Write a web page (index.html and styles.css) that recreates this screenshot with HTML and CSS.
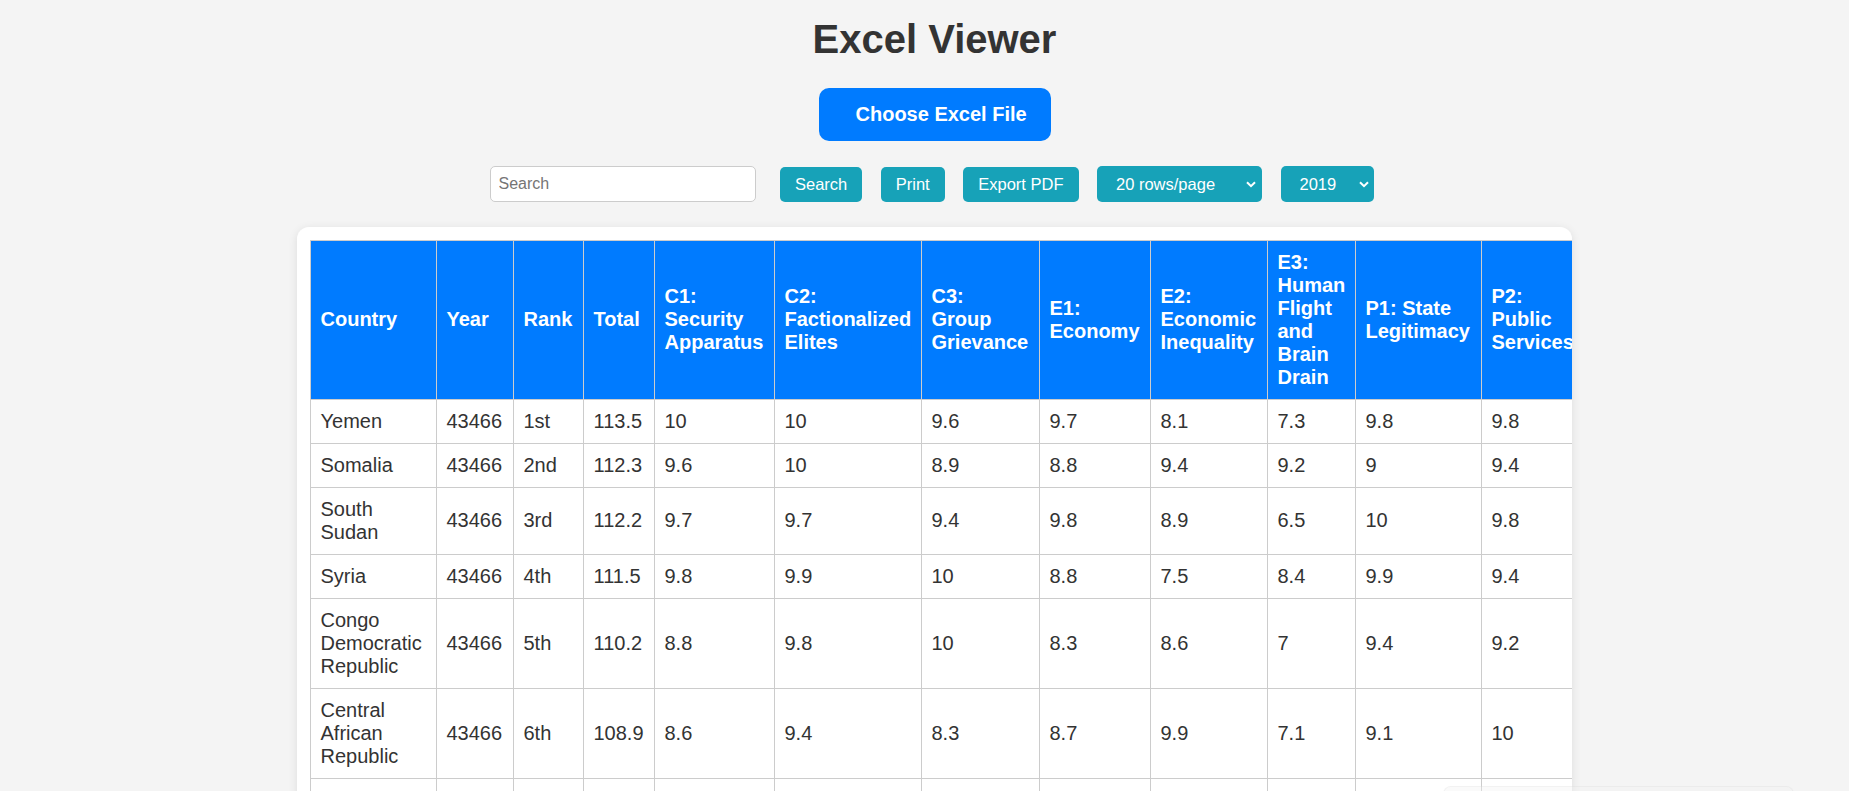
FILE: index.html
```html
<!DOCTYPE html>
<html lang="en">
<head>
<meta charset="utf-8">
<title>Excel Viewer</title>
<link rel="stylesheet" href="styles.css">
</head>
<body>
<h1 class="title">Excel Viewer</h1>
<div class="upload-row">
  <label class="upload-btn">Choose Excel File</label>
</div>
<div class="toolbar">
  <input class="search-input" type="text" placeholder="Search">
  <button class="tbtn">Search</button>
  <button class="tbtn">Print</button>
  <button class="tbtn">Export PDF</button>
  <span class="sel-wrap sel-rows">
    <select class="tsel"><option>20 rows/page</option><option>50 rows/page</option><option>100 rows/page</option></select>
    <svg class="chev" width="10" height="7" viewBox="0 0 10 7"><path d="M1 1.2 L5 5.2 L9 1.2" fill="none" stroke="#fff" stroke-width="2"/></svg>
  </span>
  <span class="sel-wrap sel-year">
    <select class="tsel"><option>2019</option><option>2020</option></select>
    <svg class="chev" width="10" height="7" viewBox="0 0 10 7"><path d="M1 1.2 L5 5.2 L9 1.2" fill="none" stroke="#fff" stroke-width="2"/></svg>
  </span>
</div>
<div class="card">
  <table class="data">
    <colgroup>
      <col class="w-country"><col class="w-year"><col class="w-rank"><col class="w-total">
      <col class="w-c1"><col class="w-c2"><col class="w-c3"><col class="w-e1"><col class="w-e2">
      <col class="w-e3"><col class="w-p1"><col class="w-p2"><col class="w-p3"><col class="w-s1">
      <col class="w-s2"><col class="w-x1">
    </colgroup>
    <thead>
      <tr>
        <th>Country</th><th>Year</th><th>Rank</th><th>Total</th>
        <th>C1: Security Apparatus</th><th>C2: Factionalized Elites</th><th class="th-tight">C3: Group Grievance</th>
        <th>E1: Economy</th><th>E2: Economic Inequality</th><th>E3: Human Flight and Brain Drain</th>
        <th>P1: State Legitimacy</th><th>P2: Public Services</th><th>P3: Human Rights</th>
        <th>S1: Demographic Pressures</th><th>S2: Refugees and IDPs</th><th>X1: External Intervention</th>
      </tr>
    </thead>
    <tbody>
      <tr><td>Yemen</td><td>43466</td><td>1st</td><td>113.5</td><td>10</td><td>10</td><td>9.6</td><td>9.7</td><td>8.1</td><td>7.3</td><td>9.8</td><td>9.8</td><td>9.7</td><td>9.9</td><td>9.6</td><td>10</td></tr>
      <tr><td>Somalia</td><td>43466</td><td>2nd</td><td>112.3</td><td>9.6</td><td>10</td><td>8.9</td><td>8.8</td><td>9.4</td><td>9.2</td><td>9</td><td>9.4</td><td>9.1</td><td>10</td><td>9.1</td><td>9.8</td></tr>
      <tr><td>South Sudan</td><td>43466</td><td>3rd</td><td>112.2</td><td>9.7</td><td>9.7</td><td>9.4</td><td>9.8</td><td>8.9</td><td>6.5</td><td>10</td><td>9.8</td><td>9.3</td><td>9.8</td><td>10</td><td>9.3</td></tr>
      <tr><td>Syria</td><td>43466</td><td>4th</td><td>111.5</td><td>9.8</td><td>9.9</td><td>10</td><td>8.8</td><td>7.5</td><td>8.4</td><td>9.9</td><td>9.4</td><td>9.8</td><td>7.7</td><td>10</td><td>10</td></tr>
      <tr><td>Congo Democratic Republic</td><td>43466</td><td>5th</td><td>110.2</td><td>8.8</td><td>9.8</td><td>10</td><td>8.3</td><td>8.6</td><td>7</td><td>9.4</td><td>9.2</td><td>9.2</td><td>9.7</td><td>10</td><td>10</td></tr>
      <tr><td>Central African Republic</td><td>43466</td><td>6th</td><td>108.9</td><td>8.6</td><td>9.4</td><td>8.3</td><td>8.7</td><td>9.9</td><td>7.1</td><td>9.1</td><td>10</td><td>9.1</td><td>8.6</td><td>10</td><td>9.9</td></tr>
      <tr><td>Chad</td><td>43466</td><td>7th</td><td>108.5</td><td>9.3</td><td>9.8</td><td>8.3</td><td>8.9</td><td>8.9</td><td>7.9</td><td>9.5</td><td>9.7</td><td>9</td><td>9.6</td><td>9.7</td><td>8.9</td></tr>
      <tr><td>Sudan</td><td>43466</td><td>8th</td><td>108</td><td>8.9</td><td>9.9</td><td>10</td><td>7.8</td><td>8</td><td>8.4</td><td>9.9</td><td>8.6</td><td>9.4</td><td>8.8</td><td>9.7</td><td>8.6</td></tr>
      <tr><td>Afghanistan</td><td>43466</td><td>9th</td><td>105</td><td>10</td><td>8.6</td><td>7.8</td><td>8.6</td><td>7.8</td><td>8.4</td><td>9.5</td><td>9.6</td><td>7.9</td><td>9</td><td>8.9</td><td>8.9</td></tr>
      <tr><td>Zimbabwe</td><td>43466</td><td>10th</td><td>99.5</td><td>8.9</td><td>9.5</td><td>6.5</td><td>8.6</td><td>8.2</td><td>6.9</td><td>9</td><td>9</td><td>8.3</td><td>8.8</td><td>8.1</td><td>7.7</td></tr>
    </tbody>
  </table>
</div>
<div class="pager-ghost"></div>
</body>
</html>
```
FILE: styles.css
```css
html, body {
  margin: 0;
  background: #f4f4f4;
}
body {
  padding: 0 0 0 20px;
  font-family: "Liberation Sans", Arial, sans-serif;
  color: #333;
}
.title {
  margin: 16px 0 26px;
  font-size: 40px;
  line-height: 46px;
  font-weight: bold;
  text-align: center;
  color: #333;
}
.upload-row {
  display: flex;
  justify-content: center;
}
.upload-btn {
  display: flex;
  align-items: center;
  box-sizing: border-box;
  height: 53px;
  width: 232px;
  padding: 0 0 0 37px;
  background: #007bff;
  color: #fff;
  font-size: 20px;
  font-weight: bold;
  border-radius: 10px;
}
.toolbar {
  display: flex;
  justify-content: center;
  align-items: center;
  gap: 18.5px;
  margin-top: 25px;
  height: 36px;
  padding-right: 6px;
}
.search-input {
  box-sizing: border-box;
  width: 266px;
  height: 36px;
  margin: 0 6px 0 0;
  padding: 0 8px;
  border: 1px solid #ccc;
  border-radius: 5px;
  background: #fff;
  font-family: "Liberation Sans", Arial, sans-serif;
  font-size: 16px;
  color: #333;
  outline: none;
}
.search-input::placeholder {
  color: #757575;
}
.tbtn {
  box-sizing: border-box;
  height: 35px;
  padding: 0 15px;
  border: none;
  border-radius: 5px;
  background: #17a2b8;
  color: #fff;
  font-family: "Liberation Sans", Arial, sans-serif;
  font-size: 16.5px;
  cursor: pointer;
}
.sel-wrap {
  position: relative;
  display: block;
  height: 36px;
}
.sel-rows { width: 165px; }
.sel-year { width: 93px; }
.tsel {
  appearance: none;
  -webkit-appearance: none;
  box-sizing: border-box;
  width: 100%;
  height: 36px;
  padding: 0 0 0 19px;
  border: none;
  border-radius: 5px;
  background: #17a2b8;
  color: #fff;
  font-family: "Liberation Sans", Arial, sans-serif;
  font-size: 16.5px;
  outline: none;
}
.chev {
  position: absolute;
  top: 15px;
  right: 6px;
  pointer-events: none;
}
.sel-year .chev { right: 5px; }
.card {
  box-sizing: border-box;
  max-width: 1275px;
  margin: 25px auto 20px;
  padding: 12.5px;
  background: #fff;
  border-radius: 12px;
  box-shadow: 0 2px 10px rgba(0, 0, 0, 0.1);
  overflow-x: auto;
}
.data {
  border-collapse: collapse;
  table-layout: fixed;
  width: 1752px;
}
.data th,
.data td {
  border: 1px solid #ccc;
  padding: 10px;
  text-align: left;
  vertical-align: middle;
  font-size: 20px;
  line-height: 23px;
}
.data th {
  background: #007bff;
  color: #fff;
  font-weight: bold;
}
.data th.th-tight {
  padding-right: 12px;
}
.data td {
  color: #333;
  background: #fff;
}
.w-country { width: 126px; }
.w-year { width: 77px; }
.w-rank { width: 70px; }
.w-total { width: 71px; }
.w-c1 { width: 120px; }
.w-c2 { width: 147px; }
.w-c3 { width: 118px; }
.w-e1 { width: 111px; }
.w-e2 { width: 117px; }
.w-e3 { width: 88px; }
.w-p1 { width: 126px; }
.w-p2 { width: 104px; }
.w-p3 { width: 100px; }
.w-s1 { width: 150px; }
.w-s2 { width: 110px; }
.w-x1 { width: 117px; }
.pager-ghost {
  position: fixed;
  left: 1443px;
  top: 786px;
  width: 349px;
  height: 40px;
  background: rgba(240, 240, 240, 0.35);
  border: 1px solid rgba(0, 0, 0, 0.03);
  border-radius: 8px;
}
```
